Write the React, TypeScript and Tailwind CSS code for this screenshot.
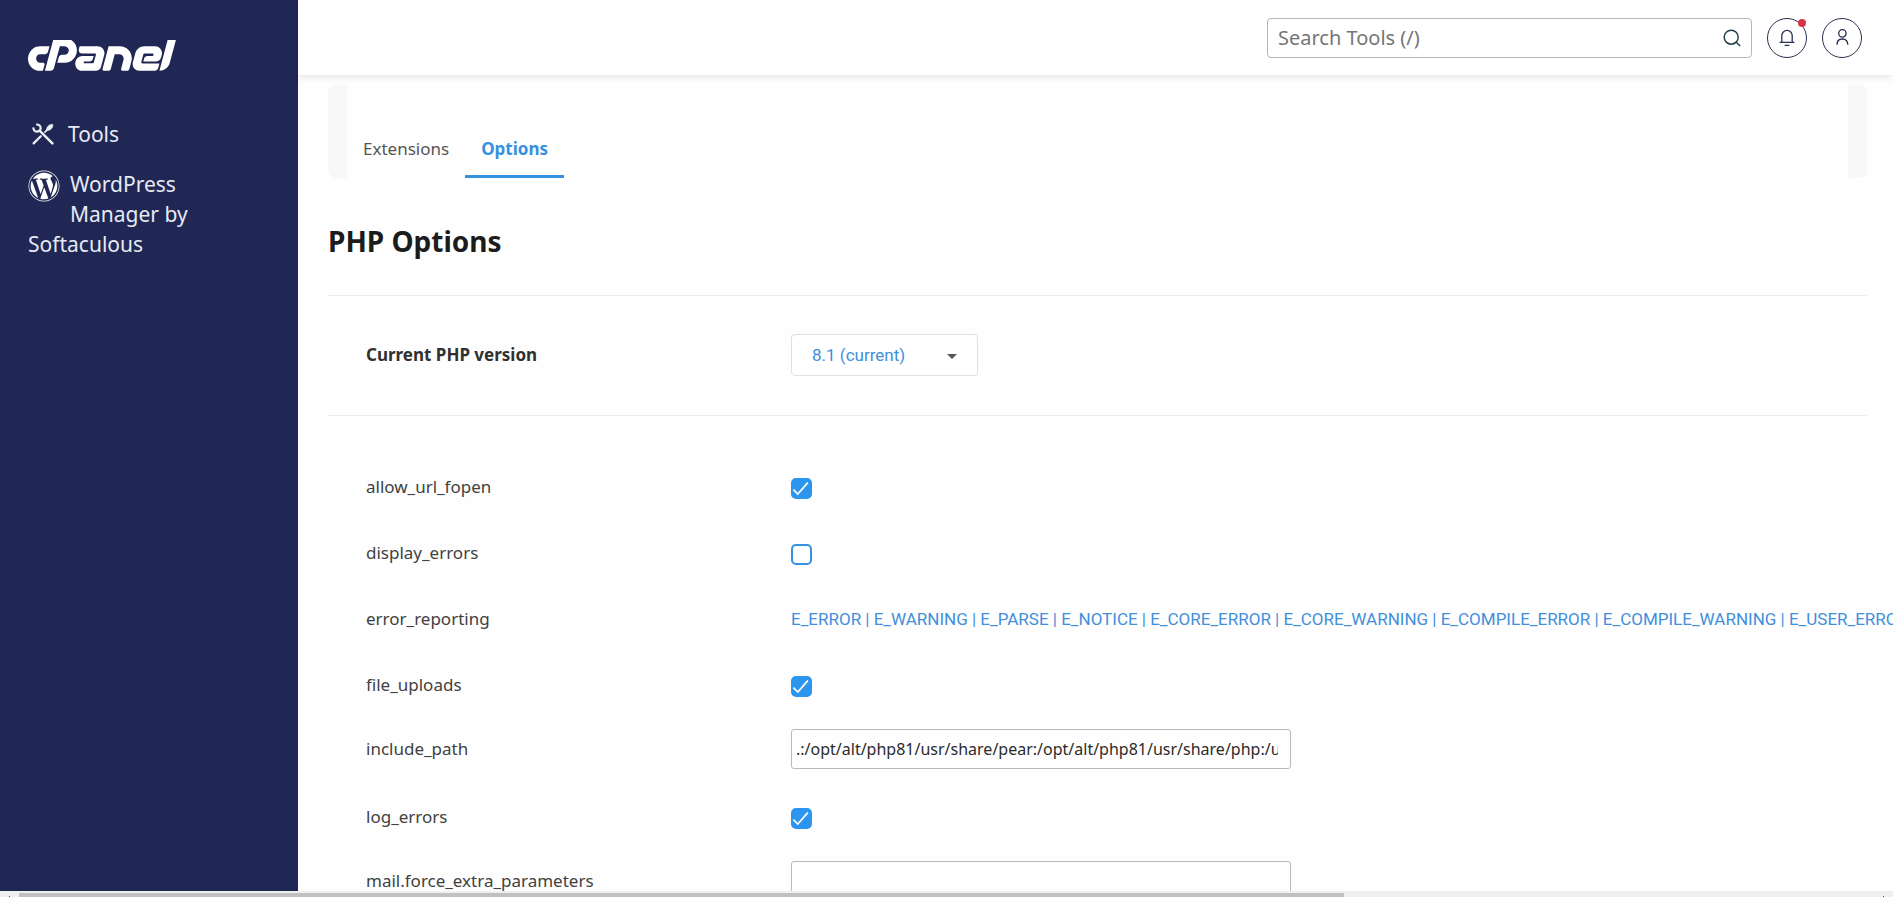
import React, { useState } from "react";
import { FaCpanel, FaWordpress } from "react-icons/fa";

type OptionRow =
  | { name: string; type: "bool"; value: boolean }
  | { name: string; type: "text"; value: string }
  | { name: string; type: "list"; value: string[] };

const options: OptionRow[] = [
  { name: "allow_url_fopen", type: "bool", value: true },
  { name: "display_errors", type: "bool", value: false },
  {
    name: "error_reporting",
    type: "list",
    value: [
      "E_ERROR",
      "E_WARNING",
      "E_PARSE",
      "E_NOTICE",
      "E_CORE_ERROR",
      "E_CORE_WARNING",
      "E_COMPILE_ERROR",
      "E_COMPILE_WARNING",
      "E_USER_ERROR",
    ],
  },
  { name: "file_uploads", type: "bool", value: true },
  {
    name: "include_path",
    type: "text",
    value: ".:/opt/alt/php81/usr/share/pear:/opt/alt/php81/usr/share/php:/usr/share/pear",
  },
  { name: "log_errors", type: "bool", value: true },
  { name: "mail.force_extra_parameters", type: "text", value: "" },
];

function ToolsIcon() {
  return (
    <svg viewBox="0 0 22 22" className="h-[22px] w-[22px] text-[#eef2f8]" fill="none" stroke="currentColor" aria-hidden="true">
      {/* wrench */}
      <path d="M7.6 7.6 20.4 20.4" strokeWidth="2.4" strokeLinecap="round" />
      <path d="M4.2 1.6 A3.6 3.6 0 1 1 1.5 4.4" strokeWidth="2.2" />
      {/* screwdriver */}
      <path d="M1.6 20.4 8.8 13.2" strokeWidth="2.2" strokeLinecap="round" />
      <path d="M12.4 9.6 15.4 6.6" strokeWidth="1.6" />
      <path d="M14.6 7.4C14 5.6 15.4 3.6 17.4 2L20.4 1.2 21 1.8 20.2 4.8C18.6 6.8 16.4 8 14.6 7.4Z" fill="currentColor" strokeWidth="0.6" />
    </svg>
  );
}

function Sidebar() {
  return (
    <aside className="w-[298px] shrink-0 bg-[#212755] px-7 pt-10 text-[21px] leading-[30px] text-[#e6eaf3]">
      <a href="#home" aria-label="cPanel" className="block">
        <FaCpanel viewBox="0 188 640 136" className="h-8 w-[148px] text-white" />
      </a>
      <nav className="mt-[47px] flex flex-col gap-5">
        <a href="#tools" className="flex items-center gap-[14px] pl-1">
          <ToolsIcon />
          Tools
        </a>
        <a href="#wordpress" className="block w-44">
          <FaWordpress className="float-left mt-px mr-[10px] mb-5 h-8 w-8 text-white" />
          WordPress Manager by Softaculous
        </a>
      </nav>
    </aside>
  );
}

function TopBar() {
  return (
    <header className="z-10 flex h-[75px] shrink-0 items-center justify-end gap-[15px] bg-white pr-[31px] shadow-[0_2px_8px_rgba(0,0,0,0.1)]">
      <form className="flex h-10 w-[485px] items-center rounded border border-[#b5b5bb]" role="search">
        <input
          type="search"
          aria-label="Search Tools"
          placeholder="Search Tools (/)"
          className="h-full min-w-0 flex-1 pl-[10px] text-xl text-[#333] outline-none placeholder:text-[#757575]"
        />
        <button type="submit" aria-label="Search" className="pr-[10px] text-[#21404a]">
          <svg viewBox="0 0 18 18" className="h-[18px] w-[18px]" fill="none" stroke="currentColor" strokeWidth="1.5">
            <circle cx="8.2" cy="8.2" r="7" />
            <path d="M13.2 13.2 17.2 17" />
          </svg>
        </button>
      </form>
      <button type="button" aria-label="Notifications" className="relative flex h-10 w-10 items-center justify-center rounded-full border border-[#293050] text-[#293050]">
        <svg viewBox="0 0 16 18" className="h-[18px] w-4" fill="none" stroke="currentColor" strokeWidth="1.3">
          <path d="M.6 13.3H15.4M2.8 13.2V6.6A5.2 5.2 0 0 1 13.2 6.6V13.2M5.6 16.4H10.4" />
        </svg>
        <span className="absolute top-0 right-0 h-2 w-2 rounded-full bg-[#d83348]" />
      </button>
      <button type="button" aria-label="Account" className="flex h-10 w-10 items-center justify-center rounded-full border border-[#293050] text-[#293050]">
        <svg viewBox="0 0 16 18" className="h-[18px] w-4" fill="none" stroke="currentColor" strokeWidth="1.3">
          <circle cx="8.4" cy="4.4" r="3.7" />
          <path d="M3 15.8C3 12.2 5 10 8.4 10S13.8 12.2 13.8 15.8" />
        </svg>
      </button>
    </header>
  );
}

function Tabs() {
  return (
    <div className="flex h-[93px] justify-between">
      <span className="w-[19px] rounded-l-lg bg-[#f6f8f9]" />
      <nav className="flex flex-1 items-end">
        <a href="#extensions" className="flex h-14 items-center border-b-[3px] border-transparent px-4 text-[#555]">
          Extensions
        </a>
        <a href="#options" className="flex h-14 items-center border-b-[3px] border-[#3592e0] px-4 font-bold text-[#3592e0]">
          Options
        </a>
      </nav>
      <span className="w-[19px] rounded-r-lg bg-[#f6f8f9]" />
    </div>
  );
}

function Checkbox({ id, defaultChecked }: { id: string; defaultChecked: boolean }) {
  const [checked, setChecked] = useState(defaultChecked);

  return (
    <span className="relative h-[21px] w-[21px]">
      <input
        id={id}
        type="checkbox"
        checked={checked}
        onChange={(e) => setChecked(e.target.checked)}
        className="block h-[21px] w-[21px] appearance-none rounded-[5px] border-2 border-[#3592e0] bg-white checked:border-[#2c96ef] checked:bg-[#2c96ef]"
      />
      {checked && (
        <svg viewBox="0 0 21 21" className="pointer-events-none absolute inset-0 h-[21px] w-[21px]" fill="none" stroke="#fff" strokeWidth="1.7">
          <path d="M2.4 11.6 6.8 16 16.8 4.6" />
        </svg>
      )}
    </span>
  );
}

function Row({ option }: { option: OptionRow }) {
  if (option.type === "bool") {
    return (
      <div className="flex h-[66px] items-center">
        <label htmlFor={option.name} className="w-[425px] shrink-0 pb-0.5">
          {option.name}
        </label>
        <Checkbox id={option.name} defaultChecked={option.value} />
      </div>
    );
  }

  if (option.type === "text") {
    return (
      <div className="flex h-[66px] items-center pb-1.5">
        <label htmlFor={option.name} className="w-[425px] shrink-0">
          {option.name}
        </label>
        <input
          id={option.name}
          type="text"
          defaultValue={option.value}
          className="h-10 w-[500px] rounded-[3px] border border-[#b9b9b9] pr-3 pl-1 text-base text-[#2b2b2b]"
        />
      </div>
    );
  }

  return (
    <div className="flex h-[66px] items-center pb-0.5">
      <span className="w-[425px] shrink-0">{option.name}</span>
      <button type="button" className="shrink-0 font-['Roboto',sans-serif] whitespace-nowrap text-[#428fdc]">
        {option.value.join(" | ")}
      </button>
    </div>
  );
}

function ScrollBar() {
  return (
    <div className="flex h-1.5 shrink-0 items-end overflow-hidden bg-[#f0f0f0]">
      <span className="flex w-[19px] justify-center">
        <span className="h-px w-px bg-[#505050]" />
      </span>
      <span className="h-1 w-[70%] bg-[#c1c1c1]" />
      <span className="flex-1" />
      <span className="flex w-[19px] justify-center">
        <span className="h-px w-px bg-[#505050]" />
      </span>
    </div>
  );
}

export default function App() {
  return (
    <div className="flex h-screen flex-col overflow-hidden bg-white font-['Noto_Sans',sans-serif] text-[#414141]">
      <div className="flex min-h-0 flex-1">
        <Sidebar />
        <div className="flex min-w-0 flex-1 flex-col">
          <TopBar />
          <main className="min-h-0 flex-1 overflow-hidden bg-[#fefefe] pt-[10px] pr-[26px] pl-[30px] text-[17px] leading-6">
            <Tabs />
            <h1 className="flex h-[117px] items-center pt-2 text-[28px] font-bold text-[#1c1c1c]">PHP Options</h1>
            <section className="flex h-[121px] items-center border-y border-[#ebebeb] pb-0.5 pl-[38px]">
              <label htmlFor="php-version" className="w-[425px] font-bold text-[#303030]">
                Current PHP version
              </label>
              <span className="relative h-[42px] w-[187px]">
                <select
                  id="php-version"
                  className="h-full w-full appearance-none rounded border border-[#dfe0e4] bg-white pl-5 font-['Roboto',sans-serif] text-[#428fdc]"
                >
                  <option>8.1 (current)</option>
                </select>
                <svg viewBox="0 0 10 5" className="pointer-events-none absolute top-5 right-[21px] h-[5px] w-[10px]" fill="#555">
                  <path d="M0 0H10L5 5Z" />
                </svg>
              </span>
            </section>
            <section className="pt-[39px] pl-[38px]">
              {options.map((option) => (
                <Row key={option.name} option={option} />
              ))}
            </section>
          </main>
        </div>
      </div>
      <ScrollBar />
    </div>
  );
}
